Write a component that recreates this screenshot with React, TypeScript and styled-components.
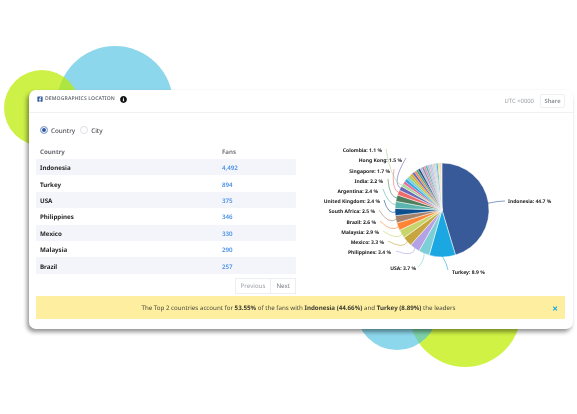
import React from 'react';
import styled, { createGlobalStyle } from 'styled-components';
import { FaFacebookSquare, FaInfoCircle } from 'react-icons/fa';

const FONT = '"Noto Sans", "Open Sans", sans-serif';

type Slice = {
    name?: string;
    value: number;
    color: string;
    labelX?: number;
    labelY?: number;
    side?: 'start' | 'end';
    from?: [number, number];
    via?: [number, number];
};

const CX = 442;
const CY = 210;
const R = 47;

const smallColors = [
    '#ec6a9c', '#2ba6e0', '#76cbe6', '#a9cf52', '#e5a13c', '#5c6bc0', '#f58b4c', '#46a08c',
    '#1f4e79', '#c3b1e1', '#7f8fa9', '#e58fb1', '#4db6ac', '#b0bec5', '#d7a9d6', '#90caf9',
    '#f3c6a5', '#aed6dc', '#c5cae9', '#29a5dc', '#dce775', '#f8d7a8', '#e1bee7', '#fff1b8',
];

const slices: Slice[] = [
    { name: 'Indonesia', value: 44.7, color: '#385a99', labelX: 508, labelY: 203, side: 'start', from: [505, 201], via: [498, 201] },
    { name: 'Turkey', value: 8.9, color: '#1ba7e1', labelX: 452, labelY: 274, side: 'start', from: [448, 270], via: [447, 264] },
    { name: 'USA', value: 3.7, color: '#7ccfd6', labelX: 416, labelY: 270, side: 'end', from: [418, 267], via: [424, 262] },
    { name: 'Philippines', value: 3.4, color: '#b3a2e6', labelX: 391, labelY: 254, side: 'end', from: [396, 251], via: [414, 258] },
    { name: 'Mexico', value: 3.3, color: '#c8a63f', labelX: 384, labelY: 244, side: 'end', from: [388, 241], via: [404, 250] },
    { name: 'Malaysia', value: 2.9, color: '#c6d56c', labelX: 379, labelY: 234, side: 'end', from: [383, 231], via: [398, 241] },
    { name: 'Brazil', value: 2.6, color: '#ff8534', labelX: 376, labelY: 224, side: 'end', from: [380, 221], via: [392, 233] },
    { name: 'South Africa', value: 2.5, color: '#a6826b', labelX: 375, labelY: 213, side: 'end', from: [379, 210], via: [388, 225] },
    { name: 'United Kingdom', value: 2.4, color: '#0b4f8f', labelX: 380, labelY: 203, side: 'end', from: [384, 200], via: [388, 215] },
    { name: 'Argentina', value: 2.4, color: '#5bb5ae', labelX: 378, labelY: 193, side: 'end', from: [383, 189], via: [388, 204] },
    { name: 'India', value: 2.2, color: '#4d7f5e', labelX: 383, labelY: 183, side: 'end', from: [388, 179], via: [389, 197] },
    { name: 'Singapore', value: 1.7, color: '#ee6b6b', labelX: 390, labelY: 173, side: 'end', from: [394, 169], via: [391, 190] },
    { name: 'Hong Kong', value: 1.5, color: '#6a68b5', labelX: 402, labelY: 162, side: 'end', from: [406, 158], via: [391, 183] },
    { name: 'Colombia', value: 1.1, color: '#a6d79b', labelX: 382, labelY: 152, side: 'end', from: [386, 149], via: [392, 184] },
    ...smallColors.map((color, i) => ({ value: 0.95 - i * 0.0275, color })),
];

const total = slices.reduce((sum, s) => sum + s.value, 0);

function polar(angle: number, radius: number) {
    return [CX + radius * Math.sin(angle), CY - radius * Math.cos(angle)];
}

function PieChart() {
    let acc = 0;
    return (
        <ChartSvg viewBox="329 130 236 150">
            {slices.map((s, i) => {
                const a0 = (acc / total) * Math.PI * 2;
                acc += s.value;
                const a1 = (acc / total) * Math.PI * 2;
                const [x0, y0] = polar(a0, R);
                const [x1, y1] = polar(a1, R);
                const large = a1 - a0 > Math.PI ? 1 : 0;
                const [ex, ey] = polar((a0 + a1) / 2, R - 1);
                return (
                    <g key={i}>
                        <path
                            d={`M${CX} ${CY}L${x0} ${y0}A${R} ${R} 0 ${large} 1 ${x1} ${y1}Z`}
                            fill={s.color}
                            stroke="#fff"
                            strokeWidth={s.name ? 0.5 : 0.2}
                        />
                        {s.from && s.via && (
                            <path
                                d={`M${s.from[0]} ${s.from[1]}Q${s.via[0]} ${s.via[1]} ${ex} ${ey}`}
                                fill="none"
                                stroke={s.color}
                                strokeWidth={0.6}
                            />
                        )}
                        {s.name && (
                            <PieLabel x={s.labelX} y={s.labelY} textAnchor={s.side}>
                                {s.name}: {s.value} %
                            </PieLabel>
                        )}
                    </g>
                );
            })}
        </ChartSvg>
    );
}

const rows = [
    ['Indonesia', '4,492'],
    ['Turkey', '894'],
    ['USA', '375'],
    ['Philippines', '346'],
    ['Mexico', '330'],
    ['Malaysia', '290'],
    ['Brazil', '257'],
];

export default function App() {
    return (
        <>
            <GlobalStyle />
            <Stage>
                <Blob $x={115} $y={104} $r={58} $color="#8dd7ec" />
                <Blob $x={42} $y={108} $r={38} $color="rgba(186, 236, 0, 0.72)" />
                <Blob $x={465} $y={311} $r={56} $color="#cff244" />
                <Blob $x={397} $y={309} $r={41} $color="rgba(77, 192, 225, 0.64)" />

                <Card>
                    <CardHeader>
                        <HeaderTitle>
                            <FaFacebookSquare color="#2f5a9e" size={6} />
                            <span>DEMOGRAPHICS LOCATION</span>
                            <FaInfoCircle color="#111" size={7} />
                        </HeaderTitle>
                        <HeaderRight>
                            <span>UTC +0000</span>
                            <ShareButton>Share</ShareButton>
                        </HeaderRight>
                    </CardHeader>

                    <CardBody>
                        <Columns>
                            <LeftColumn>
                                <RadioRow>
                                    <RadioOption>
                                        <Radio $checked />
                                        Country
                                    </RadioOption>
                                    <RadioOption>
                                        <Radio />
                                        City
                                    </RadioOption>
                                </RadioRow>

                                <TableHead>
                                    <NameCell>Country</NameCell>
                                    <span>Fans</span>
                                </TableHead>
                                {rows.map(([country, fans], i) => (
                                    <TableRow key={country} $striped={i % 2 === 0}>
                                        <NameCell>{country}</NameCell>
                                        <FansCell>{fans}</FansCell>
                                    </TableRow>
                                ))}

                                <Pagination>
                                    <PageButton $muted>Previous</PageButton>
                                    <PageButton>Next</PageButton>
                                </Pagination>
                            </LeftColumn>
                            <PieChart />
                        </Columns>

                        <Alert>
                            <span>
                                The Top 2 countries account for <b>53.55%</b> of the fans with{' '}
                                <b>Indonesia (44.66%)</b> and <b>Turkey (8.89%)</b> the leaders
                            </span>
                            <CloseMark>×</CloseMark>
                        </Alert>
                    </CardBody>
                </Card>
            </Stage>
        </>
    );
}

const GlobalStyle = createGlobalStyle`
    html, body {
        margin: 0;
        padding: 0;
        background: #fff;
        overflow: hidden;
    }
    * {
        box-sizing: border-box;
    }
`;

const Stage = styled.div`
    position: relative;
    width: 577px;
    height: 414px;
    padding: 90px 4px 0 29px;
    font-family: ${FONT};
    text-rendering: geometricPrecision;
    -webkit-font-smoothing: antialiased;
    overflow: hidden;
`;

const Blob = styled.div<{ $x: number; $y: number; $r: number; $color: string }>`
    position: absolute;
    left: ${(p) => p.$x - p.$r}px;
    top: ${(p) => p.$y - p.$r}px;
    width: ${(p) => p.$r * 2}px;
    height: ${(p) => p.$r * 2}px;
    border-radius: 50%;
    background: ${(p) => p.$color};
`;

const Card = styled.div`
    position: relative;
    width: 544px;
    height: 239px;
    background: #fff;
    border-radius: 7px;
    box-shadow: -2px 3px 4px rgba(0, 0, 0, 0.42);
    will-change: transform;
`;

const CardHeader = styled.div`
    display: flex;
    align-items: center;
    justify-content: space-between;
    height: 23px;
    padding: 0 8px;
    border-bottom: 1px solid #eef0f3;
`;

const HeaderTitle = styled.div`
    display: flex;
    align-items: center;
    gap: 2px;
    margin-bottom: 4px;
    font-size: 5.1px;
    font-weight: 600;
    color: #6b6f76;
    letter-spacing: 0.1px;

    svg:last-child {
        margin-left: 3px;
    }
`;

const HeaderRight = styled.div`
    display: flex;
    align-items: center;
    gap: 6px;
    font-size: 5.9px;
    color: #9a9ea5;
`;

const ShareButton = styled.div`
    display: flex;
    align-items: center;
    justify-content: center;
    width: 25px;
    height: 14px;
    border: 1px solid #eef0f3;
    border-radius: 2px;
    font-weight: 600;
    font-size: 5.8px;
    color: #8a8e95;
`;

const CardBody = styled.div`
    padding: 0 8px 0 7px;
`;

const Columns = styled.div`
    display: flex;
    height: 183px;
`;

const LeftColumn = styled.div`
    display: flex;
    flex-direction: column;
    width: 260px;
    flex-shrink: 0;
`;

const RadioRow = styled.div`
    display: flex;
    gap: 5px;
    align-items: center;
    padding: 4px 0 0 4px;
    height: 30px;
`;

const RadioOption = styled.div`
    display: flex;
    align-items: center;
    gap: 3px;
    font-size: 6.3px;
    font-weight: 500;
    color: #4a4d52;
`;

const Radio = styled.span<{ $checked?: boolean }>`
    width: 8px;
    height: 8px;
    border-radius: 50%;
    border: 1px solid ${(p) => (p.$checked ? '#9db2d6' : '#dfe1e5')};
    background: ${(p) => (p.$checked ? '#2f5aa8' : '#fff')};
    box-shadow: ${(p) => (p.$checked ? 'inset 0 0 0 1px #fff' : 'none')};
`;

const TableHead = styled.div`
    display: grid;
    grid-template-columns: 186px 1fr;
    align-items: center;
    height: 15px;
    margin-top: 1px;
    font-size: 6.2px;
    font-weight: 600;
    color: #66696f;
`;

const TableRow = styled.div<{ $striped: boolean }>`
    display: grid;
    grid-template-columns: 186px 1fr;
    align-items: center;
    height: 16.4px;
    padding-top: 1px;
    font-size: 6.2px;
    color: #1e1e1e;
    background: ${(p) => (p.$striped ? '#f3f5fa' : '#fff')};
`;

const NameCell = styled.span`
    padding-left: 4px;
    font-weight: 700;
`;

const FansCell = styled.span`
    font-weight: 600;
    color: #4a90e8;
`;

const Pagination = styled.div`
    display: flex;
    justify-content: flex-end;
    margin-top: 4px;
`;

const PageButton = styled.div<{ $muted?: boolean }>`
    display: flex;
    align-items: center;
    height: 16px;
    padding: 0 5px;
    border: 1px solid #eceef2;
    margin-left: -1px;
    font-size: 6.2px;
    color: ${(p) => (p.$muted ? '#9a9ea5' : '#777b82')};
`;

const ChartSvg = styled.svg`
    width: 236px;
    height: 150px;
    margin: 17px 0 0 33px;
    flex-shrink: 0;
    overflow: visible;
`;

const PieLabel = styled.text`
    font-family: ${FONT};
    font-size: 5px;
    font-weight: 700;
    fill: #222;
`;

const Alert = styled.div`
    position: relative;
    display: flex;
    align-items: center;
    justify-content: center;
    height: 23px;
    padding-right: 4px;
    border-radius: 1px;
    background: #feeea0;
    font-size: 6.2px;
    color: #4a4a3e;

    b {
        color: #3a3a30;
    }
`;

const CloseMark = styled.span`
    position: absolute;
    right: 7px;
    top: 50%;
    transform: translateY(-50%);
    font-size: 10px;
    font-weight: 700;
    color: #1ba7e1;
`;
